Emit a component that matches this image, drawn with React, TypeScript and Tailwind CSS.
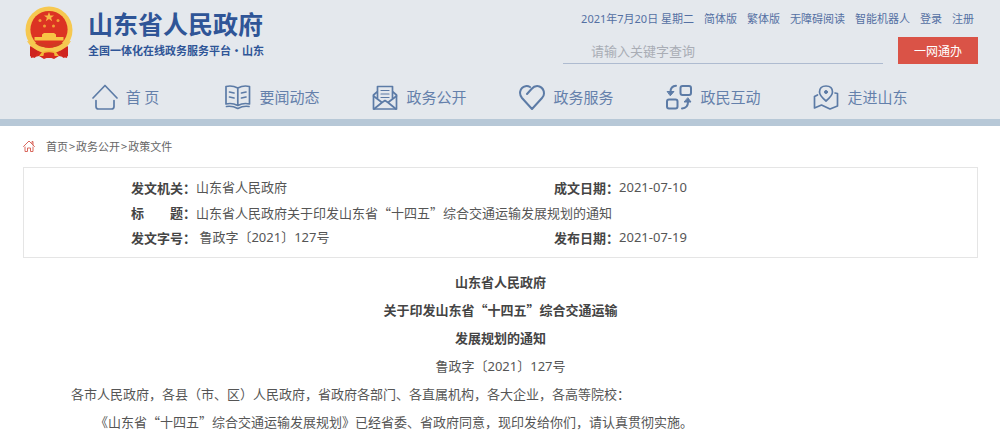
import type { ReactNode } from 'react';

const Emblem = () => (
  <svg viewBox="0 0 48 54" className="h-[54px] w-12 shrink-0" aria-hidden="true">
    <path d="M7 38 L5 45 L6 52 L14 50 L19 53 L24 51 L29 53 L34 50 L42 52 L43 45 L41 38 Z" fill="#d62a1f" />
    <circle cx="24" cy="24" r="23.5" fill="#f6c850" />
    <circle cx="24" cy="23.5" r="18.6" fill="#dc3323" />
    <path d="M24 6 L25.3 9.4 L29 9.5 L26.1 11.7 L27.2 15.2 L24 13.1 L20.8 15.2 L21.9 11.7 L19 9.5 L22.7 9.4 Z" fill="#f8b845" />
    <g fill="#f3a038">
      <circle cx="15" cy="14.5" r="1.5" />
      <circle cx="33" cy="14.5" r="1.5" />
      <circle cx="19.5" cy="20" r="1.5" />
      <circle cx="28.5" cy="20" r="1.5" />
    </g>
    <path d="M17 28.5 L19 27 H29 L31 28.5 V31 H38.5 V34.5 H9.5 V31 H17 Z" fill="#f8c545" />
    <path d="M2 35 Q13 36 18 41 Q24 45 30 41 Q35 36 46 35 Q42 42 36 45 L30 43 Q24 48 18 43 L12 45 Q6 42 2 35 Z" fill="#f6c850" />
    <path d="M10 37 Q15 35.5 20 38 Q24 40 28 38 Q33 35.5 38 37 Q33 41 29 41 Q24 38 19 41 Q14 41 10 37 Z" fill="#cf3a22" />
    <path d="M5 40 L13 45 L10 52 L5 50 Z M43 40 L35 45 L38 52 L43 50 Z" fill="#cf2420" />
    <path d="M17 46 Q24 43 31 46 L34 50 H14 Z" fill="#f3b83a" />
    <path d="M19 47 Q24 45.5 29 47 L30 52 H18 Z" fill="#d62a1f" />
  </svg>
);

const Icon = ({ children }: { children: ReactNode }) => (
  <svg
    viewBox="0 0 26 26"
    className="size-[26px] shrink-0"
    fill="none"
    stroke="#5c7ba6"
    strokeWidth="1.7"
    strokeLinecap="round"
    strokeLinejoin="round"
    aria-hidden="true"
  >
    {children}
  </svg>
);

const navItems = [
  {
    label: '首 页',
    icon: (
      <Icon>
        <path d="M1 14 L13 1.5 L25 14" />
        <path d="M4 16.5 V22.5 Q4 25 6.5 25 H19.5 Q22 25 22 22.5 V16.5" />
      </Icon>
    ),
  },
  {
    label: '要闻动态',
    icon: (
      <Icon>
        <path d="M1 2.5 Q7 1 12.8 4 Q18.5 1 24.5 2.5 V20 Q18.5 18.5 12.8 21.5 Q7 18.5 1 20 Z M12.8 4 V21.5" />
        <path d="M4.5 8 L9 9 M4.5 13 L9 14 M16.5 9 L21 8 M16.5 14 L21 13" />
        <path d="M1.5 22.5 Q7 21.5 12.8 24.5 Q18.5 21.5 24 22.5" />
      </Icon>
    ),
  },
  {
    label: '政务公开',
    icon: (
      <Icon>
        <path d="M5 8 L1.5 11 V25 H24.5 V11 L21 8" />
        <path d="M5.5 14 V2.5 H20.5 V14" />
        <path d="M9 6.5 H17 M9 10 H17 M9 13.5 H17" strokeWidth="1.2" />
        <path d="M1.5 12 L10 18.5 L13 16.5 L16 18.5 L24.5 12 M10 18.5 L2 25 M16 18.5 L24 25" />
      </Icon>
    ),
  },
  {
    label: '政务服务',
    icon: (
      <Icon>
        <path
          d="M8 10 L12.5 5 Q16 1 20.5 2.5 Q25 4.5 25 9.5 Q25 12 23 14 L13 25 L3 14 Q0.5 11 1.2 7.5 Q2.2 3 6.5 2.2 Q9 1.8 11 3"
          strokeWidth="2"
        />
      </Icon>
    ),
  },
  {
    label: '政民互动',
    icon: (
      <Icon>
        <g strokeWidth="2">
          <rect x="14.5" y="2" width="10.5" height="9" rx="2" />
          <rect x="1" y="15.5" width="10.5" height="9" rx="2" />
          <path d="M10 1.8 Q4.5 2 4.5 8 M16 24.5 Q22 24 22 18" />
        </g>
        <path d="M1.5 7.5 H8 L4.5 11.5 Z M18.5 18 H25 L22 14 Z" fill="#5c7ba6" strokeWidth="1" />
      </Icon>
    ),
  },
  {
    label: '走进山东',
    icon: (
      <Icon>
        <path d="M13 17 Q6.5 11.5 6.5 8 Q6.5 2 13 2 Q19.5 2 19.5 8 Q19.5 11.5 13 17 Z" />
        <circle cx="13" cy="8" r="1.5" fill="#5c7ba6" strokeWidth="1" />
        <path d="M4.5 11 L1.5 12.5 V24 L8.5 21 L17 25 L24.5 22 V9.5 L22 9" />
      </Icon>
    ),
  },
];

const topLinks = ['简体版', '繁体版', '无障碍阅读', '智能机器人', '登录', '注册'];

const crumbs = ['首页', '政务公开', '政策文件'];

const Header = () => (
  <header className="border-b-[7px] border-[#b7c8d7] bg-[#e4e8ed]">
    <div className="flex items-start justify-between pt-1.5 pr-[22px] pl-[25px]">
      <a href="#" className="flex items-start gap-[15px] text-[#2f5597]">
        <Emblem />
        <span className="flex flex-col pt-0.5">
          <span className="text-[25px] leading-[30px] font-bold">山东省人民政府</span>
          <span className="pt-1 text-[11px] leading-4 font-bold">全国一体化在线政务服务平台·山东</span>
        </span>
      </a>
      <div className="flex flex-col items-end">
        <div className="flex gap-2.5 pt-1 pr-1 font-['Noto_Sans','Noto_Sans_CJK_SC',sans-serif] text-[11px] leading-[18px] text-[#5470a3]">
          <span>2021年7月20日 星期二</span>
          {topLinks.map((link) => (
            <a key={link} href="#">
              {link}
            </a>
          ))}
        </div>
        <form className="flex items-end gap-[15px] pt-[9px]">
          <input
            type="text"
            aria-label="站内搜索"
            placeholder="请输入关键字查询"
            className="h-[26px] w-80 border-b border-[#aebbd0] bg-transparent pl-7 text-[13px] outline-none placeholder:text-[#a9adb5]"
          />
          <button type="button" className="h-[27px] w-20 bg-[#da5347] text-xs text-white">
            一网通办
          </button>
        </form>
      </div>
    </div>
    <nav className="grid grid-cols-6 pt-5 pr-[66px] pb-[9px] pl-[52px]">
      {navItems.map((item) => (
        <a key={item.label} href="#" className="flex items-center justify-center gap-2 text-[15px] leading-[26px] text-[#6480ab]">
          {item.icon}
          {item.label}
        </a>
      ))}
    </nav>
  </header>
);

const Breadcrumb = () => (
  <nav className="flex items-center gap-[11px] pt-3 pb-[13px] text-[11px] leading-4 text-[#666]">
    <svg viewBox="0 0 12 12" className="size-3" fill="none" stroke="#d9685e" strokeLinecap="round" strokeLinejoin="round" aria-hidden="true">
      <path d="M0.5 6.5 L6 1 L11.5 6.5 M9 3.5 V1.5 H10 V5" />
      <path d="M2 7 V11.5 H4.5 V8 H7.5 V11.5 H10 V7" />
    </svg>
    <span>
      {crumbs.map((crumb, i) => (
        <span key={crumb}>
          {i > 0 && <span className="px-px">&gt;</span>}
          <a href="#">{crumb}</a>
        </span>
      ))}
    </span>
  </nav>
);

const Field = ({ label, children }: { label: string; children: ReactNode }) => (
  <div className="flex">
    <dt className="font-bold whitespace-pre text-[#444]">{label}</dt>
    <dd className="font-['Noto_Sans','Noto_Sans_CJK_SC',sans-serif] whitespace-pre">{children}</dd>
  </div>
);

export default function App() {
  return (
    <div className="bg-white font-['Noto_Sans_CJK_SC',sans-serif] text-[13px] text-[#555]" lang="zh-CN">
      <Header />
      <main className="pr-[22px] pl-[23px]">
        <Breadcrumb />
        <dl className="grid grid-cols-2 border border-[#e5e5e5] py-[7px] pl-[107px] leading-[25px]">
          <Field label="发文机关：">山东省人民政府</Field>
          <Field label="成文日期：">2021-07-10</Field>
          <div className="col-span-2 flex">
            <dt className="font-bold whitespace-pre text-[#444]">标　　题：</dt>
            <dd>山东省人民政府关于印发山东省“十四五”综合交通运输发展规划的通知</dd>
          </div>
          <Field label="发文字号："> 鲁政字〔2021〕127号</Field>
          <Field label="发布日期：">2021-07-19</Field>
        </dl>
        <article className="pt-2.5 leading-7">
          <h1 className="text-center font-bold text-[#444]">
            山东省人民政府
            <br />
            关于印发山东省“十四五”综合交通运输
            <br />
            发展规划的通知
          </h1>
          <p className="text-center font-['Noto_Sans','Noto_Sans_CJK_SC',sans-serif]">鲁政字〔2021〕127号</p>
          <p className="pl-12">各市人民政府，各县（市、区）人民政府，省政府各部门、各直属机构，各大企业，各高等院校：</p>
          <p className="pl-[72px]">《山东省“十四五”综合交通运输发展规划》已经省委、省政府同意，现印发给你们，请认真贯彻实施。</p>
        </article>
      </main>
    </div>
  );
}
